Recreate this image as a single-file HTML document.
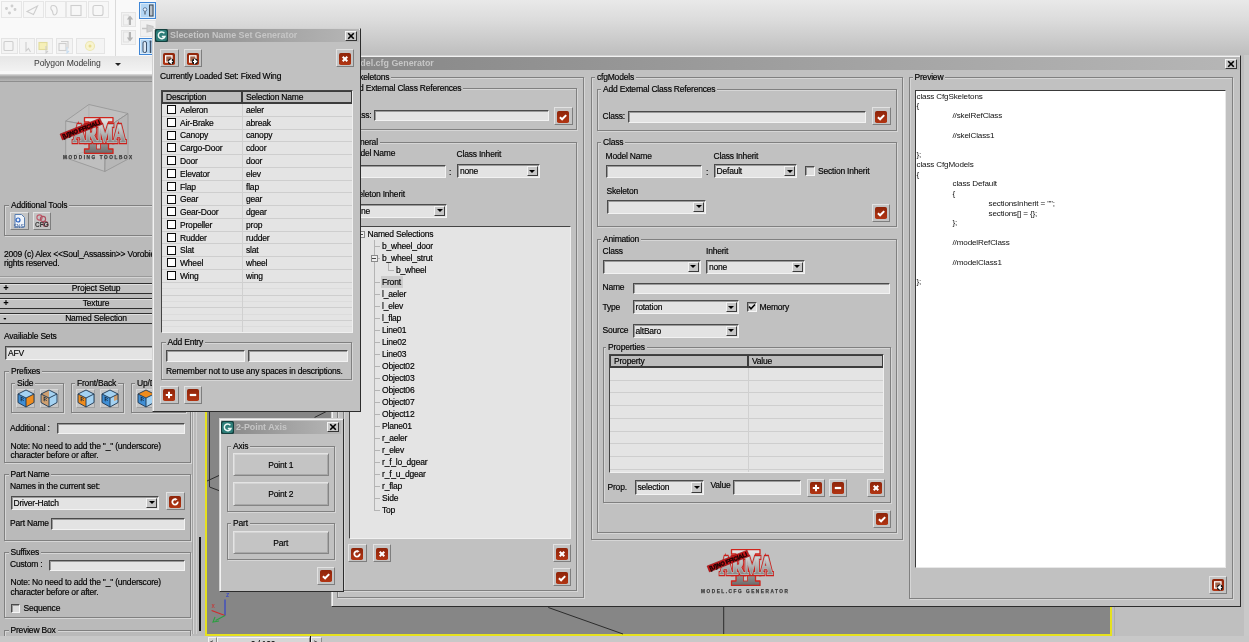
<!DOCTYPE html>
<html><head><meta charset="utf-8"><title>Model.cfg Generator</title>
<style>
html,body{margin:0;padding:0;}
body{width:1249px;height:642px;overflow:hidden;position:relative;background:#bebebe;font-family:"Liberation Sans",sans-serif;font-size:8.5px;letter-spacing:-0.2px;color:#0a0a0a;}
.a{position:absolute;box-sizing:border-box;white-space:nowrap;}
.t,.it,.pbtn{color:#000;-webkit-text-stroke:0.17px #000;}
.gb{border:1px solid #808080;box-shadow:1px 1px 0 #d6d6d6, inset 1px 1px 0 #d6d6d6;}
.inp{background:#e3e3e3;border:1px solid;border-color:#4a4a4a #f2f2f2 #f2f2f2 #4a4a4a;box-shadow:inset 1px 1px 0 #9a9a9a;}
.it{position:absolute;left:2px;top:50%;margin-top:-6px;line-height:12px;height:12px;}
.dd{position:absolute;right:1px;top:1px;bottom:1px;width:11px;background:#c6c6c6;border:1px solid;border-color:#f4f4f4 #3a3a3a #3a3a3a #f4f4f4;box-sizing:border-box;}
.dd i{position:absolute;left:50%;top:50%;margin:-1.5px 0 0 -3px;border:3px solid transparent;border-top:3.5px solid #000;border-bottom:0;}
.btn{background:#c4c4c4;border:1.3px solid;border-color:#e2e2e2 #7e7e7e #7e7e7e #e2e2e2;}
.ic{position:absolute;}
.chk{background:#dedede;border:1px solid;border-color:#4a4a4a #f6f6f6 #f6f6f6 #4a4a4a;box-shadow:inset 1px 1px 0 #9a9a9a;}
.dlg{background:#c1c1c1;border:1px solid;border-color:#d2d2d2 #2c2c2c #2c2c2c #d2d2d2;border-width:1px 1.4px 1.4px 1px;box-shadow:inset 1px 1px 0 #f2f2f2;}
.tb{background:linear-gradient(90deg,#868686 0%,#a4a4a4 60%,#b6b6b6 100%);}
.tt{color:#c6c6c6;font-weight:bold;font-size:8.9px;letter-spacing:0;}
.cb{background:#c8c8c8;border:1px solid;border-color:#f4f4f4 #333 #333 #f4f4f4;}
.lv{background:#e4e4e4;border:1px solid;border-color:#444 #f0f0f0 #f0f0f0 #444;}
.lvh{background:#bdbdbd;border:1px solid #3c3c3c;border-width:1px 1px 2px 1px;}
.pbtn{background:#c4c4c4;border:1px solid;border-color:#e4e4e4 #858585 #858585 #e4e4e4;box-shadow:inset 1px 1px 0 #d4d4d4, inset -1px -1px 0 #a8a8a8;text-align:center;}
.roll{background:#c2c2c2;border:solid #2e2e2e;border-width:1.4px 1px 1.9px 1px;box-shadow:inset 0 1px 0 #dedede;}
pre{margin:0;font-family:"Liberation Sans",sans-serif;}
</style></head><body>
<svg width="0" height="0" style="position:absolute"><defs><linearGradient id="rg" x1="0" y1="0" x2="0" y2="1"><stop offset="0" stop-color="#8e2409"/><stop offset="1" stop-color="#b23513"/></linearGradient></defs></svg>
<div id="root" style="position:absolute;left:0;top:0;width:1249px;height:642px;overflow:hidden;will-change:transform;">

<div class="a " style="left:0px;top:0px;width:1249px;height:56px;background:linear-gradient(180deg,#e9e9e9 0%,#dcdcdc 35%,#bdbdbd 100%)"></div>
<div class="a " style="left:1112px;top:55px;width:137px;height:587px;background:#bfbfbf"></div>
<div class="a " style="left:1114px;top:55px;width:1px;height:587px;background:#adadad"></div>
<div class="a " style="left:1244px;top:55px;width:5px;height:587px;background:#c9c9c9"></div>
<div class="a " style="left:0px;top:0px;width:156px;height:56.3px;background:#f9f9f9"></div>
<div class="a " style="left:115px;top:0px;width:1px;height:56px;background:#dadada"></div>
<div class="a " style="left:0px;top:56.3px;width:156px;height:14.7px;background:linear-gradient(180deg,#e6e6e6,#f2f2f2)"></div>
<div class="a " style="left:0px;top:71px;width:156px;height:2.5px;background:#f8f8f8"></div>
<div class="a " style="left:0px;top:73.5px;width:156px;height:3.5px;background:linear-gradient(180deg,#dedede,#9c9c9c)"></div>
<div class="a " style="left:0px;top:77px;width:156px;height:4px;background:linear-gradient(180deg,#9c9c9c,#b6b6b6)"></div>
<div class="a " style="left:0px;top:81px;width:156px;height:1px;background:#8e8e8e"></div>
<div class="a" style="left:34px;top:57px;height:12px;line-height:12px;font-size:8.6px;letter-spacing:-0.1px;color:#383838;">Polygon Modeling</div>
<div class="a" style="left:115px;top:63px;border:3px solid transparent;border-top:3.5px solid #222;border-bottom:0;"></div>
<div class="a " style="left:1px;top:1px;width:21px;height:17px;border:1px solid #e6e6e6;background:#f7f7f7"></div>
<div class="a " style="left:23px;top:1px;width:21px;height:17px;border:1px solid #e6e6e6;background:#f7f7f7"></div>
<div class="a " style="left:45px;top:1px;width:21px;height:17px;border:1px solid #e6e6e6;background:#f7f7f7"></div>
<div class="a " style="left:66px;top:1px;width:21px;height:17px;border:1px solid #e6e6e6;background:#f7f7f7"></div>
<div class="a " style="left:88px;top:1px;width:21px;height:17px;border:1px solid #e6e6e6;background:#f7f7f7"></div>
<div class="a " style="left:1px;top:38px;width:17px;height:16px;border:1px solid #e4e4e4;background:#f4f4f4"></div>
<div class="a " style="left:19px;top:38px;width:16px;height:16px;border:1px solid #e4e4e4;background:#f4f4f4"></div>
<div class="a " style="left:36px;top:38px;width:17px;height:16px;border:1px solid #e4e4e4;background:#f4f4f4"></div>
<div class="a " style="left:56px;top:38px;width:17px;height:16px;border:1px solid #e4e4e4;background:#f4f4f4"></div>
<div class="a " style="left:76px;top:38px;width:29px;height:16px;border:1px solid #e4e4e4;background:#f4f4f4"></div>
<div class="a " style="left:121px;top:12px;width:15px;height:15px;border:1px solid #e4e4e4;background:#f2f2f2"></div>
<div class="a " style="left:121px;top:30px;width:15px;height:15px;border:1px solid #e4e4e4;background:#f2f2f2"></div>
<div class="a " style="left:139px;top:2px;width:17.3px;height:17px;border:1.3px solid #3f86d6;background:#b4d6f4;box-shadow:inset 0 0 0 1px #dcecfa"></div>
<div class="a " style="left:139px;top:38px;width:17.3px;height:17px;border:1.3px solid #3f86d6;background:#b4d6f4;box-shadow:inset 0 0 0 1px #dcecfa"></div>
<div class="a " style="left:140px;top:20px;width:16px;height:17px;border:1px solid #e4e4e4;background:#f0f0f0"></div>
<div class="a " style="left:0px;top:82px;width:206px;height:554px;background:#bababa"></div>
<div class="a " style="left:204.5px;top:83px;width:907.5px;height:553px;background:#868686;border:2px solid #e6e11e"></div>
<div class="a " style="left:0px;top:636px;width:1249px;height:6px;background:#c6c6c6"></div>
<svg class="a" style="left:0;top:0" width="160" height="56" viewBox="0 0 160 56">
<g fill="none" stroke="#cecece" stroke-width="1.1">
<circle cx="6.5" cy="8.5" r=".9" fill="#d6d6d6"/><circle cx="12" cy="6" r=".9" fill="#d6d6d6"/><circle cx="15" cy="9.5" r=".9" fill="#d6d6d6"/><circle cx="9.5" cy="13" r=".9" fill="#d6d6d6"/>
<path d="M27 11.5L37.5 6L33.5 14.5Z"/>
<path d="M53 5.5C50 5.5 50.5 9 52 10.5C53.5 12 52 15 54.5 15C58 15 58.5 5.5 53 5.5Z"/>
<rect x="71" y="5.5" width="10" height="10"/>
<rect x="93" y="5.500" width="10" height="10" rx="2"/>
<rect x="4" y="41.500" width="9" height="9" rx="1"/>
<path d="M26 42V51L28.500 48.500L30.500 52"/>
<rect x="39" y="42.500" width="8" height="7" fill="#f6f0b8" stroke="#e2dc9c"/>
<path d="M46 46V53L48 51"/>
<rect x="59" y="43.500" width="7" height="7"/><path d="M61 41.500H68V48.500"/><path d="M67 47V53L69 51" stroke="#c6dcf0"/>
<circle cx="90" cy="46" r="4.500" stroke="#ece6b0" fill="#f8f4d0"/><circle cx="90" cy="46" r="1.500" fill="#e8dc90" stroke="none"/>
<rect x="123.500" y="15" width="5" height="10" stroke="#e2e2e2"/><path d="M129 25V19.500H126.800L130 15.500L133.200 19.500H131V25Z" fill="#b4b4b4" stroke="none"/>
<rect x="123.500" y="32" width="5" height="10" stroke="#e2e2e2"/><path d="M129 32V37.500H126.800L130 41.500L133.200 37.500H131V32Z" fill="#b4b4b4" stroke="none"/>
<path d="M142 28.500H147" stroke="#c4c4c4" stroke-width="1.500"/><path d="M147 25V32L153 30.500V26.500Z" fill="#cfcfcf" stroke="#c4c4c4"/>
</g>
<rect x="149.500" y="5" width="3.500" height="11" fill="#b8c0c8" stroke="#3c4650" stroke-width="1"/><circle cx="145" cy="9.500" r="1.800" fill="#e8f2fc" stroke="#4a6a90" stroke-width=".8"/><path d="M145 11.500V14.500" stroke="#3c4650" stroke-width="1"/>
<rect x="143" y="41.500" width="3.500" height="11" rx="1.500" fill="#dce8f4" stroke="#3c5068" stroke-width="1"/><path d="M150.500 42V53" stroke="#3c5068" stroke-width="1.400"/><circle cx="150.500" cy="41.500" r="1" fill="#3c5068"/>
</svg>
<svg class="a" style="left:0;top:0" width="1249" height="642" viewBox="0 0 1249 642"><g stroke="#2c2c2c" stroke-width="1" fill="none">
<path d="M209.500 85V487L219 490.600M207 481L219 475.500"/>
<path d="M314.600 417.400L327 411.200"/>
<path d="M548.300 607.500L623 634"/>
<path d="M723.700 606V634"/>
</g>
<g fill="none" stroke-width="1.100">
<path d="M225 615.600V599.600" stroke="#2a3cd0"/>
<path d="M225 615.600L211.600 610.500" stroke="#d02a2a"/>
<path d="M225 615.600L215.600 620.400" stroke="#2aa040"/>
<path d="M215 617L213 622L219 621" stroke="#2aa040"/>
</g></svg>
<div class="a" style="left:226px;top:590.5px;font-size:6.5px;line-height:7px;color:#2a3cd0;letter-spacing:0">z</div>
<div class="a" style="left:211.5px;top:601.5px;font-size:6.5px;line-height:7px;color:#d02a2a;letter-spacing:0">x</div>
<div class="a gb" style="left:4px;top:205px;width:187px;height:31px;"></div>
<div class="a t" style="left:9px;top:199px;height:12px;line-height:12px;background:#bababa;padding:0 2px;">Additional Tools</div>
<div class="a btn" style="left:10px;top:212px;width:19px;height:18px;"></div>
<div class="a btn" style="left:32.5px;top:212px;width:18.5px;height:18px;"></div>
<svg class="a" style="left:12px;top:213px" width="16" height="16" viewBox="0 0 16 16"><path d="M3 1.5H9.5L12.5 4.5V14H3Z" fill="#eef3fa" stroke="#5a7fb0" stroke-width="1"/><circle cx="6" cy="7" r="2" fill="none" stroke="#2a62c0" stroke-width="1.2"/></svg>
<div class="a" style="left:13.5px;top:222.5px;font-size:5px;line-height:6px;color:#3a5f9a;letter-spacing:0">SNS</div>
<svg class="a" style="left:34px;top:213px" width="16" height="16" viewBox="0 0 16 16"><circle cx="5.5" cy="4.5" r="2.6" fill="none" stroke="#c05a6a" stroke-width="1.1"/><circle cx="9" cy="6" r="2.6" fill="none" stroke="#b05060" stroke-width="1.1"/><circle cx="11.5" cy="11" r="2.4" fill="none" stroke="#a04a5a" stroke-width="1.1"/></svg>
<div class="a" style="left:35px;top:220.5px;font-size:6.5px;line-height:8px;color:#333;letter-spacing:0;font-weight:bold">CFG</div>
<div class="a t" style="left:4px;top:248px;height:12px;line-height:12px;">2009 (c) Alex &lt;&lt;Soul_Assassin&gt;&gt; Vorobiev. All</div>
<div class="a t" style="left:4px;top:257.3px;height:12px;line-height:12px;">rights reserved.</div>
<div class="a " style="left:0px;top:276px;width:206px;height:1px;background:#9a9a9a"></div>
<div class="a " style="left:0px;top:277px;width:206px;height:1px;background:#d4d4d4"></div>
<div class="a roll" style="left:-2px;top:282.5px;width:197px;height:11.6px;"></div>
<div class="a t" style="left:3.5px;top:282.3px;height:12px;line-height:12px;font-weight:bold">+</div>
<div class="a t" style="left:1px;width:190px;text-align:center;top:282.3px;height:12px;line-height:12px;">Project Setup</div>
<div class="a roll" style="left:-2px;top:297.5px;width:197px;height:11.6px;"></div>
<div class="a t" style="left:3.5px;top:297.3px;height:12px;line-height:12px;font-weight:bold">+</div>
<div class="a t" style="left:1px;width:190px;text-align:center;top:297.3px;height:12px;line-height:12px;">Texture</div>
<div class="a roll" style="left:-2px;top:312.5px;width:197px;height:11.6px;"></div>
<div class="a t" style="left:3.5px;top:312.3px;height:12px;line-height:12px;font-weight:bold">-</div>
<div class="a t" style="left:1px;width:190px;text-align:center;top:312.3px;height:12px;line-height:12px;">Named Selection</div>
<div class="a t" style="left:4px;top:330px;height:12px;line-height:12px;">Availiable Sets</div>
<div class="a inp" style="left:5px;top:345.5px;width:195px;height:14px;"><span class="it" style="left:2px">AFV</span></div>
<div class="a gb" style="left:4px;top:371px;width:187px;height:92px;"></div>
<div class="a t" style="left:9px;top:365px;height:12px;line-height:12px;background:#bababa;padding:0 2px;">Prefixes</div>
<div class="a gb" style="left:10.5px;top:383px;width:53.5px;height:29.5px;"></div>
<div class="a t" style="left:15px;top:377px;height:12px;line-height:12px;background:#bababa;padding:0 2px;">Side</div>
<div class="a gb" style="left:70.5px;top:383px;width:53.5px;height:29.5px;"></div>
<div class="a t" style="left:75px;top:377px;height:12px;line-height:12px;background:#bababa;padding:0 2px;">Front/Back</div>
<div class="a gb" style="left:130.5px;top:383px;width:55.5px;height:29.5px;"></div>
<div class="a t" style="left:135px;top:377px;height:12px;line-height:12px;background:#bababa;padding:0 2px;">Up/Down</div>
<div class="a " style="left:15.8px;top:389.3px;width:19px;height:19px;background:#c6c6c6;border:1px solid;border-color:#d8d8d8 #a2a2a2 #a2a2a2 #d8d8d8"></div>
<svg class="a" style="left:17.5px;top:390.3px;overflow:visible" width="16" height="17" viewBox="0 0 16 17"><path d="M8 0L16 4L8 8L0 4Z" fill="#a4d2f2"/><path d="M0 4L8 8V17L0 12.5Z" fill="#3f8fd6"/><path d="M8 8L16 4V12.5L8 17Z" fill="#f08c1c"/><path d="M8 0L16 4V12.5L8 17L0 12.5V4ZM0 4L8 8L16 4M8 8V17" fill="none" stroke="#1c3550" stroke-width=".9" stroke-linejoin="round"/><text x="2.3" y="11.3" transform="skewY(26.5) translate(0,-1.6)" font-family="Liberation Sans,sans-serif" font-weight="bold" font-size="6.4" fill="#14283c">F</text></svg>
<div class="a " style="left:39.5px;top:389.3px;width:19px;height:19px;background:#c6c6c6;border:1px solid;border-color:#d8d8d8 #a2a2a2 #a2a2a2 #d8d8d8"></div>
<svg class="a" style="left:41.2px;top:390.3px;overflow:visible" width="16" height="17" viewBox="0 0 16 17"><path d="M8 0L16 4L8 8L0 4Z" fill="#a4d2f2"/><path d="M0 4L8 8V17L0 12.5Z" fill="#cfa070"/><path d="M8 8L16 4V12.5L8 17Z" fill="#a4d2f2"/><path d="M8 0L0 4L8 8Z" fill="#cfa070"/><path d="M8 0L16 4V12.5L8 17L0 12.5V4ZM0 4L8 8L16 4M8 8V17" fill="none" stroke="#1c3550" stroke-width=".9" stroke-linejoin="round"/><text x="2.3" y="11.3" transform="skewY(26.5) translate(0,-1.6)" font-family="Liberation Sans,sans-serif" font-weight="bold" font-size="6.4" fill="#14283c">F</text></svg>
<div class="a " style="left:76px;top:389.3px;width:19px;height:19px;background:#c6c6c6;border:1px solid;border-color:#d8d8d8 #a2a2a2 #a2a2a2 #d8d8d8"></div>
<svg class="a" style="left:77.7px;top:390.3px;overflow:visible" width="16" height="17" viewBox="0 0 16 17"><path d="M8 0L16 4L8 8L0 4Z" fill="#a4d2f2"/><path d="M0 4L8 8V17L0 12.5Z" fill="#f08c1c"/><path d="M8 8L16 4V12.5L8 17Z" fill="#a4d2f2"/><path d="M8 0L16 4V12.5L8 17L0 12.5V4ZM0 4L8 8L16 4M8 8V17" fill="none" stroke="#1c3550" stroke-width=".9" stroke-linejoin="round"/><text x="2.3" y="11.3" transform="skewY(26.5) translate(0,-1.6)" font-family="Liberation Sans,sans-serif" font-weight="bold" font-size="6.4" fill="#14283c">F</text></svg>
<div class="a " style="left:100px;top:389.3px;width:19px;height:19px;background:#c6c6c6;border:1px solid;border-color:#d8d8d8 #a2a2a2 #a2a2a2 #d8d8d8"></div>
<svg class="a" style="left:101.7px;top:390.3px;overflow:visible" width="16" height="17" viewBox="0 0 16 17"><path d="M8 0L16 4L8 8L0 4Z" fill="#a4d2f2"/><path d="M0 4L8 8V17L0 12.5Z" fill="#3f8fd6"/><path d="M8 8L16 4V12.5L8 17Z" fill="#a4d2f2"/><path d="M12 6L16 4V9.5L12 11Z" fill="#cfa070"/><path d="M8 0L16 4V12.5L8 17L0 12.5V4ZM0 4L8 8L16 4M8 8V17" fill="none" stroke="#1c3550" stroke-width=".9" stroke-linejoin="round"/><text x="2.3" y="11.3" transform="skewY(26.5) translate(0,-1.6)" font-family="Liberation Sans,sans-serif" font-weight="bold" font-size="6.4" fill="#14283c">F</text></svg>
<div class="a " style="left:136.3px;top:389.3px;width:19px;height:19px;background:#c6c6c6;border:1px solid;border-color:#d8d8d8 #a2a2a2 #a2a2a2 #d8d8d8"></div>
<svg class="a" style="left:138px;top:390.3px;overflow:visible" width="16" height="17" viewBox="0 0 16 17"><path d="M8 0L16 4L8 8L0 4Z" fill="#f08c1c"/><path d="M0 4L8 8V17L0 12.5Z" fill="#3f8fd6"/><path d="M8 8L16 4V12.5L8 17Z" fill="#a4d2f2"/><path d="M8 0L16 4V12.5L8 17L0 12.5V4ZM0 4L8 8L16 4M8 8V17" fill="none" stroke="#1c3550" stroke-width=".9" stroke-linejoin="round"/><text x="2.3" y="11.3" transform="skewY(26.5) translate(0,-1.6)" font-family="Liberation Sans,sans-serif" font-weight="bold" font-size="6.4" fill="#14283c">F</text></svg>
<div class="a " style="left:160px;top:389.3px;width:19px;height:19px;background:#c6c6c6;border:1px solid;border-color:#d8d8d8 #a2a2a2 #a2a2a2 #d8d8d8"></div>
<svg class="a" style="left:161.7px;top:390.3px;overflow:visible" width="16" height="17" viewBox="0 0 16 17"><path d="M8 0L16 4L8 8L0 4Z" fill="#a4d2f2"/><path d="M0 4L8 8V17L0 12.5Z" fill="#3f8fd6"/><path d="M8 8L16 4V12.5L8 17Z" fill="#a4d2f2"/><path d="M0 12.5L8 17L16 12.5L8 14Z" fill="#f08c1c"/><path d="M8 0L16 4V12.5L8 17L0 12.5V4ZM0 4L8 8L16 4M8 8V17" fill="none" stroke="#1c3550" stroke-width=".9" stroke-linejoin="round"/><text x="2.3" y="11.3" transform="skewY(26.5) translate(0,-1.6)" font-family="Liberation Sans,sans-serif" font-weight="bold" font-size="6.4" fill="#14283c">F</text></svg>
<div class="a t" style="left:10px;top:421.5px;height:12px;line-height:12px;">Additional :</div>
<div class="a inp" style="left:56.5px;top:422.5px;width:128.5px;height:11.5px;"></div>
<div class="a t" style="left:10.5px;top:439.6px;height:12px;line-height:12px;">Note: No need to add the "_" (underscore)</div>
<div class="a t" style="left:10.5px;top:449px;height:12px;line-height:12px;">character before or after.</div>
<div class="a gb" style="left:4px;top:474px;width:187px;height:66.5px;"></div>
<div class="a t" style="left:8.5px;top:468px;height:12px;line-height:12px;background:#bababa;padding:0 2px;">Part Name</div>
<div class="a t" style="left:10px;top:480px;height:12px;line-height:12px;">Names in the current set:</div>
<div class="a inp" style="left:10.5px;top:495.5px;width:148.5px;height:14px;"><span class="it">Driver-Hatch</span><span class="dd"><i></i></span></div>
<div class="a btn" style="left:166.3px;top:492.3px;width:18.3px;height:18.1px;"></div><svg class="a" style="left:169.2px;top:495.7px" width="12" height="12" viewBox="0 0 12 12"><rect x="0" y="0" width="12" height="12" rx="1.8" fill="url(#rg)"/><path d="M6.6 3.3A2.7 2.7 0 1 0 8.7 5.6" stroke="#fff" stroke-width="1.8" fill="none"/><path d="M6.2 1.9L8.6 3.3L6.2 4.7Z" fill="#fff"/></svg>
<div class="a t" style="left:10px;top:517px;height:12px;line-height:12px;">Part Name</div>
<div class="a inp" style="left:51px;top:518px;width:134px;height:11.5px;"></div>
<div class="a gb" style="left:4px;top:552px;width:187px;height:65.5px;"></div>
<div class="a t" style="left:8.5px;top:546px;height:12px;line-height:12px;background:#bababa;padding:0 2px;">Suffixes</div>
<div class="a t" style="left:10px;top:558.4px;height:12px;line-height:12px;">Custom :</div>
<div class="a inp" style="left:48.5px;top:559.5px;width:136.5px;height:11px;"></div>
<div class="a t" style="left:10.5px;top:576px;height:12px;line-height:12px;">Note: No need to add the "_" (underscore)</div>
<div class="a t" style="left:10.5px;top:585.6px;height:12px;line-height:12px;">character before or after.</div>
<div class="a chk" style="left:11px;top:603.5px;width:9px;height:9px;"></div>
<div class="a t" style="left:23.5px;top:602px;height:12px;line-height:12px;">Sequence</div>
<div class="a gb" style="left:4px;top:630px;width:187px;height:20px;"></div>
<div class="a t" style="left:8.5px;top:624px;height:12px;line-height:12px;background:#bababa;padding:0 2px;">Preview Box</div>
<div class="a " style="left:192px;top:83px;width:1px;height:551px;background:#a2a2a2"></div>
<div class="a " style="left:193px;top:83px;width:1px;height:551px;background:#d6d6d6"></div>
<div class="a " style="left:198.5px;top:537px;width:2.5px;height:94px;background:#141414"></div>
<div class="a " style="left:196px;top:83px;width:1px;height:551px;background:#cfcfcf"></div>
<svg class="a" style="left:40.5px;top:96.5px;overflow:visible" width="120" height="95" viewBox="0 0 120 95"><defs><linearGradient id="mg1" x1="0" y1="0" x2="0" y2="1"><stop offset="0" stop-color="#e6e6e6"/><stop offset="0.5" stop-color="#b4b4b4"/><stop offset="1" stop-color="#6a6a6a"/></linearGradient></defs><polygon points="47.9,7.5 87.0,16.5 64.5,31.5 24.7,24.0" fill="#c2c2c2" fill-opacity=".55" stroke="#8f8f8f" stroke-width=".7"/><polygon points="24.7,24.0 64.5,31.5 63.8,74.5 24.7,60.8" fill="#c4c4c4" fill-opacity=".5" stroke="#8f8f8f" stroke-width=".7"/><polygon points="64.5,31.5 87.0,16.5 87.0,62.1 63.8,74.5" fill="#b4b4b4" fill-opacity=".5" stroke="#8f8f8f" stroke-width=".7"/><path d="M47.9,7.5L47.9,53.5L24.7,60.8M47.9,53.5L87.0,62.1" stroke="#a4a4a4" stroke-width=".5" fill="none"/><g stroke="#d0241c" stroke-width="1.3" fill="url(#mg1)" stroke-linejoin="round"><path d="M43.5 20.600H72V25H67.500V52H72V56.400H43.5V52H48V25H43.5Z"/></g><rect x="55.5" y="25.5" width="4" height="26.5" fill="#c4c4c4" stroke="#d0241c" stroke-width=".8"/><text x="58.2" y="45.2" text-anchor="middle" font-family="Liberation Serif,serif" font-weight="bold" font-size="25.2" textLength="52.5" lengthAdjust="spacingAndGlyphs" fill="#cc1f1a" stroke="#cc1f1a" stroke-width="4.6" stroke-linejoin="miter">ARMA</text><text x="58.2" y="45.2" text-anchor="middle" font-family="Liberation Serif,serif" font-weight="bold" font-size="25.2" textLength="52.5" lengthAdjust="spacingAndGlyphs" fill="url(#mg1)" stroke="#b0b0b0" stroke-width="2.2" stroke-linejoin="miter">ARMA</text><text x="58.2" y="45.2" text-anchor="middle" font-family="Liberation Serif,serif" font-weight="bold" font-size="25.2" textLength="52.5" lengthAdjust="spacingAndGlyphs" fill="url(#mg1)">ARMA</text><g transform="translate(40.3,32.2) rotate(-21.5)"><rect x="-21.5" y="-3.3" width="43" height="6.4" fill="#c4161a" stroke="#8e0e10" stroke-width=".5"/><text x="0" y="2.2" text-anchor="middle" font-family="Liberation Sans,sans-serif" font-weight="bold" font-size="5.8" textLength="40" lengthAdjust="spacingAndGlyphs" fill="#140303" stroke="#140303" stroke-width=".35">[U]NO FFICIAL!</text></g><text x="22.1" y="62.3" font-family="Liberation Sans,sans-serif" font-weight="bold" font-size="4.7" textLength="68.9" lengthAdjust="spacing" fill="#3c3c3c" stroke="#3c3c3c" stroke-width=".25">MODDING TOOLBOX</text></svg>
<div class="a dlg" style="left:331px;top:55px;width:910px;height:552px;"></div>
<div class="a tb" style="left:333px;top:57px;width:906px;height:13px;"></div>
<svg class="a" style="left:333px;top:57px" width="13" height="13" viewBox="0 0 13 13"><rect width="13" height="13" rx="1.5" fill="#143f3d"/><rect x="1" y="1" width="11" height="11" rx="2" fill="#2d7d78"/><path d="M9.4 4.2A3.4 3.4 0 1 0 9.9 7.6H6.8" stroke="#eef8f6" stroke-width="1.5" fill="none"/></svg>
<div class="a tt" style="left:347.5px;top:57px;height:13px;line-height:13px;">Model.cfg Generator</div>
<div class="a cb" style="left:1225px;top:58.5px;width:12px;height:10px;"><svg width="12" height="10" viewBox="0 0 12 10" style="position:absolute;left:-1px;top:-1px"><path d="M3.2 2.2L8.8 7.8M8.8 2.2L3.2 7.8" stroke="#000" stroke-width="1.6" fill="none"/></svg></div>
<div class="a gb" style="left:337px;top:76.5px;width:247px;height:521.5px;"></div>
<div class="a t" style="left:341px;top:70.5px;height:12px;line-height:12px;background:#c1c1c1;padding:0 2px;">cfgSkeletons</div>
<div class="a gb" style="left:343px;top:87.5px;width:234px;height:42px;"></div>
<div class="a t" style="left:347px;top:81.5px;height:12px;line-height:12px;background:#c1c1c1;padding:0 2px;">Add External Class References</div>
<div class="a t" style="left:349px;top:108.8px;height:12px;line-height:12px;">Class:</div>
<div class="a inp" style="left:374px;top:109.8px;width:174.5px;height:11.7px;"></div>
<div class="a btn" style="left:554.3px;top:107.3px;width:18.3px;height:18.1px;"></div><svg class="a" style="left:557.2px;top:110.7px" width="12" height="12" viewBox="0 0 12 12"><rect x="0" y="0" width="12" height="12" rx="1.8" fill="url(#rg)"/><path d="M2.9 6.3L5.1 8.3L9.2 4.1" stroke="#fff" stroke-width="2" fill="none"/></svg>
<div class="a gb" style="left:343px;top:142px;width:234px;height:449px;"></div>
<div class="a t" style="left:347px;top:136px;height:12px;line-height:12px;background:#c1c1c1;padding:0 2px;">General</div>
<div class="a t" style="left:349px;top:147.3px;height:12px;line-height:12px;">Model Name</div>
<div class="a t" style="left:456.5px;top:147.5px;height:12px;line-height:12px;">Class Inherit</div>
<div class="a inp" style="left:349px;top:165px;width:97px;height:13px;"></div>
<div class="a t" style="left:449px;top:166px;height:12px;line-height:12px;">:</div>
<div class="a inp" style="left:457px;top:164px;width:82.5px;height:14px;"><span class="it">none</span><span class="dd"><i></i></span></div>
<div class="a t" style="left:349px;top:188px;height:12px;line-height:12px;">Skeleton Inherit</div>
<div class="a inp" style="left:349px;top:203.5px;width:98px;height:14px;"><span class="it">none</span><span class="dd"><i></i></span></div>
<div class="a lv" style="left:349px;top:226px;width:222px;height:312.5px;"></div>
<div class="a " style="left:373.5px;top:240px;width:1px;height:270.5px;background:#b4b4b4"></div>
<div class="a t" style="left:367.5px;top:228px;height:12px;line-height:12px;">Named Selections</div>
<div class="a " style="left:374px;top:245.5px;width:6px;height:1px;background:#b4b4b4"></div>
<div class="a t" style="left:382px;top:240px;height:12px;line-height:12px;">b_wheel_door</div>
<div class="a " style="left:374px;top:257.5px;width:6px;height:1px;background:#b4b4b4"></div>
<div class="a t" style="left:382px;top:252px;height:12px;line-height:12px;">b_wheel_strut</div>
<div class="a " style="left:387.5px;top:263px;width:1px;height:7px;background:#b4b4b4"></div>
<div class="a " style="left:388px;top:269.5px;width:6px;height:1px;background:#b4b4b4"></div>
<div class="a t" style="left:396px;top:264px;height:12px;line-height:12px;">b_wheel</div>
<div class="a " style="left:374px;top:281.5px;width:6px;height:1px;background:#b4b4b4"></div>
<div class="a " style="left:380.5px;top:276px;width:22.5px;height:12px;background:#cdcdcd"></div>
<div class="a t" style="left:382px;top:276px;height:12px;line-height:12px;">Front</div>
<div class="a " style="left:374px;top:293.5px;width:6px;height:1px;background:#b4b4b4"></div>
<div class="a t" style="left:382px;top:288px;height:12px;line-height:12px;">l_aeler</div>
<div class="a " style="left:374px;top:305.5px;width:6px;height:1px;background:#b4b4b4"></div>
<div class="a t" style="left:382px;top:300px;height:12px;line-height:12px;">l_elev</div>
<div class="a " style="left:374px;top:317.5px;width:6px;height:1px;background:#b4b4b4"></div>
<div class="a t" style="left:382px;top:312px;height:12px;line-height:12px;">l_flap</div>
<div class="a " style="left:374px;top:329.5px;width:6px;height:1px;background:#b4b4b4"></div>
<div class="a t" style="left:382px;top:324px;height:12px;line-height:12px;">Line01</div>
<div class="a " style="left:374px;top:341.5px;width:6px;height:1px;background:#b4b4b4"></div>
<div class="a t" style="left:382px;top:336px;height:12px;line-height:12px;">Line02</div>
<div class="a " style="left:374px;top:353.5px;width:6px;height:1px;background:#b4b4b4"></div>
<div class="a t" style="left:382px;top:348px;height:12px;line-height:12px;">Line03</div>
<div class="a " style="left:374px;top:365.5px;width:6px;height:1px;background:#b4b4b4"></div>
<div class="a t" style="left:382px;top:360px;height:12px;line-height:12px;">Object02</div>
<div class="a " style="left:374px;top:377.5px;width:6px;height:1px;background:#b4b4b4"></div>
<div class="a t" style="left:382px;top:372px;height:12px;line-height:12px;">Object03</div>
<div class="a " style="left:374px;top:389.5px;width:6px;height:1px;background:#b4b4b4"></div>
<div class="a t" style="left:382px;top:384px;height:12px;line-height:12px;">Object06</div>
<div class="a " style="left:374px;top:401.5px;width:6px;height:1px;background:#b4b4b4"></div>
<div class="a t" style="left:382px;top:396px;height:12px;line-height:12px;">Object07</div>
<div class="a " style="left:374px;top:413.5px;width:6px;height:1px;background:#b4b4b4"></div>
<div class="a t" style="left:382px;top:408px;height:12px;line-height:12px;">Object12</div>
<div class="a " style="left:374px;top:425.5px;width:6px;height:1px;background:#b4b4b4"></div>
<div class="a t" style="left:382px;top:420px;height:12px;line-height:12px;">Plane01</div>
<div class="a " style="left:374px;top:437.5px;width:6px;height:1px;background:#b4b4b4"></div>
<div class="a t" style="left:382px;top:432px;height:12px;line-height:12px;">r_aeler</div>
<div class="a " style="left:374px;top:449.5px;width:6px;height:1px;background:#b4b4b4"></div>
<div class="a t" style="left:382px;top:444px;height:12px;line-height:12px;">r_elev</div>
<div class="a " style="left:374px;top:461.5px;width:6px;height:1px;background:#b4b4b4"></div>
<div class="a t" style="left:382px;top:456px;height:12px;line-height:12px;">r_f_lo_dgear</div>
<div class="a " style="left:374px;top:473.5px;width:6px;height:1px;background:#b4b4b4"></div>
<div class="a t" style="left:382px;top:468px;height:12px;line-height:12px;">r_f_u_dgear</div>
<div class="a " style="left:374px;top:485.5px;width:6px;height:1px;background:#b4b4b4"></div>
<div class="a t" style="left:382px;top:480px;height:12px;line-height:12px;">r_flap</div>
<div class="a " style="left:374px;top:497.5px;width:6px;height:1px;background:#b4b4b4"></div>
<div class="a t" style="left:382px;top:492px;height:12px;line-height:12px;">Side</div>
<div class="a " style="left:374px;top:509.5px;width:6px;height:1px;background:#b4b4b4"></div>
<div class="a t" style="left:382px;top:504px;height:12px;line-height:12px;">Top</div>
<div class="a " style="left:357.5px;top:230.5px;width:7px;height:7px;background:#eee;border:1px solid #8a8a8a"></div>
<div class="a " style="left:359px;top:233.5px;width:4px;height:1px;background:#444"></div>
<div class="a " style="left:370.5px;top:254.5px;width:7px;height:7px;background:#eee;border:1px solid #8a8a8a"></div>
<div class="a " style="left:372px;top:257.5px;width:4px;height:1px;background:#444"></div>
<div class="a btn" style="left:348.3px;top:544.3px;width:18.3px;height:18.1px;"></div><svg class="a" style="left:351.2px;top:547.7px" width="12" height="12" viewBox="0 0 12 12"><rect x="0" y="0" width="12" height="12" rx="1.8" fill="url(#rg)"/><path d="M6.6 3.3A2.7 2.7 0 1 0 8.7 5.6" stroke="#fff" stroke-width="1.8" fill="none"/><path d="M6.2 1.9L8.6 3.3L6.2 4.7Z" fill="#fff"/></svg>
<div class="a btn" style="left:372.8px;top:544.3px;width:18.3px;height:18.1px;"></div><svg class="a" style="left:375.7px;top:547.7px" width="12" height="12" viewBox="0 0 12 12"><rect x="0" y="0" width="12" height="12" rx="1.8" fill="url(#rg)"/><path d="M3.7 3.7L8.3 8.3M8.3 3.7L3.7 8.3" stroke="#fff" stroke-width="2" fill="none"/></svg>
<div class="a btn" style="left:552.8px;top:544.3px;width:18.3px;height:18.1px;"></div><svg class="a" style="left:555.7px;top:547.7px" width="12" height="12" viewBox="0 0 12 12"><rect x="0" y="0" width="12" height="12" rx="1.8" fill="url(#rg)"/><path d="M3.7 3.7L8.3 8.3M8.3 3.7L3.7 8.3" stroke="#fff" stroke-width="2" fill="none"/></svg>
<div class="a btn" style="left:552.8px;top:568.3px;width:18.3px;height:18.1px;"></div><svg class="a" style="left:555.7px;top:571.7px" width="12" height="12" viewBox="0 0 12 12"><rect x="0" y="0" width="12" height="12" rx="1.8" fill="url(#rg)"/><path d="M2.9 6.3L5.1 8.3L9.2 4.1" stroke="#fff" stroke-width="2" fill="none"/></svg>
<div class="a gb" style="left:590.5px;top:76.5px;width:312.5px;height:463px;"></div>
<div class="a t" style="left:595px;top:70.5px;height:12px;line-height:12px;background:#c1c1c1;padding:0 2px;">cfgModels</div>
<div class="a gb" style="left:596.5px;top:88.5px;width:300.5px;height:42px;"></div>
<div class="a t" style="left:601px;top:82.5px;height:12px;line-height:12px;background:#c1c1c1;padding:0 2px;">Add External Class References</div>
<div class="a t" style="left:602.5px;top:109.5px;height:12px;line-height:12px;">Class:</div>
<div class="a inp" style="left:627.5px;top:111px;width:238.5px;height:11.5px;"></div>
<div class="a btn" style="left:872.4px;top:107.1px;width:18.3px;height:18.1px;"></div><svg class="a" style="left:875.3px;top:110.5px" width="12" height="12" viewBox="0 0 12 12"><rect x="0" y="0" width="12" height="12" rx="1.8" fill="url(#rg)"/><path d="M2.9 6.3L5.1 8.3L9.2 4.1" stroke="#fff" stroke-width="2" fill="none"/></svg>
<div class="a gb" style="left:596.5px;top:142px;width:300.5px;height:85px;"></div>
<div class="a t" style="left:601px;top:136px;height:12px;line-height:12px;background:#c1c1c1;padding:0 2px;">Class</div>
<div class="a t" style="left:605.5px;top:149.5px;height:12px;line-height:12px;">Model Name</div>
<div class="a t" style="left:713.5px;top:149.5px;height:12px;line-height:12px;">Class Inherit</div>
<div class="a inp" style="left:605.5px;top:165px;width:96px;height:13px;"></div>
<div class="a t" style="left:706px;top:166px;height:12px;line-height:12px;">:</div>
<div class="a inp" style="left:713.5px;top:164px;width:83.5px;height:14px;"><span class="it">Default</span><span class="dd"><i></i></span></div>
<div class="a chk" style="left:804.5px;top:166px;width:10px;height:10px;"></div>
<div class="a t" style="left:818px;top:165px;height:12px;line-height:12px;">Section Inherit</div>
<div class="a t" style="left:606.5px;top:185px;height:12px;line-height:12px;">Skeleton</div>
<div class="a inp" style="left:606.5px;top:199.5px;width:99.5px;height:14px;"><span class="dd"><i></i></span></div>
<div class="a btn" style="left:871.8px;top:203.8px;width:18.3px;height:18.1px;"></div><svg class="a" style="left:874.7px;top:207.2px" width="12" height="12" viewBox="0 0 12 12"><rect x="0" y="0" width="12" height="12" rx="1.8" fill="url(#rg)"/><path d="M2.9 6.3L5.1 8.3L9.2 4.1" stroke="#fff" stroke-width="2" fill="none"/></svg>
<div class="a gb" style="left:596.5px;top:239px;width:300.5px;height:293.5px;"></div>
<div class="a t" style="left:601px;top:233px;height:12px;line-height:12px;background:#c1c1c1;padding:0 2px;">Animation</div>
<div class="a t" style="left:602.5px;top:245px;height:12px;line-height:12px;">Class</div>
<div class="a t" style="left:706px;top:245px;height:12px;line-height:12px;">Inherit</div>
<div class="a inp" style="left:602.5px;top:259.5px;width:98px;height:14.5px;"><span class="dd"><i></i></span></div>
<div class="a inp" style="left:706px;top:259.5px;width:98.5px;height:14.5px;"><span class="it">none</span><span class="dd"><i></i></span></div>
<div class="a t" style="left:602.5px;top:281px;height:12px;line-height:12px;">Name</div>
<div class="a inp" style="left:632.5px;top:282.5px;width:257.5px;height:11.5px;"></div>
<div class="a t" style="left:602.5px;top:300.7px;height:12px;line-height:12px;">Type</div>
<div class="a inp" style="left:632.5px;top:300px;width:106px;height:14px;"><span class="it">rotation</span><span class="dd"><i></i></span></div>
<div class="a chk" style="left:747px;top:301.8px;width:10px;height:10px;"><svg width="10" height="10" viewBox="0 0 10 10" style="position:absolute;left:-1px;top:-1px"><path d="M2 4.5L4 6.8L8 2.4" stroke="#000" stroke-width="1.5" fill="none"/></svg></div>
<div class="a t" style="left:759.5px;top:300.5px;height:12px;line-height:12px;">Memory</div>
<div class="a t" style="left:602.5px;top:324.3px;height:12px;line-height:12px;">Source</div>
<div class="a inp" style="left:632.5px;top:324px;width:106px;height:13.5px;"><span class="it">altBaro</span><span class="dd"><i></i></span></div>
<div class="a gb" style="left:602.5px;top:347px;width:288.5px;height:155.5px;"></div>
<div class="a t" style="left:606px;top:341px;height:12px;line-height:12px;background:#c1c1c1;padding:0 2px;">Properties</div>
<div class="a lv" style="left:609px;top:354px;width:274.5px;height:119px;"></div>
<div class="a lvh" style="left:610px;top:355px;width:272.5px;height:12.5px;"></div>
<div class="a " style="left:747px;top:355px;width:2px;height:12.5px;background:#3c3c3c"></div>
<div class="a t" style="left:614px;top:355.25px;height:12px;line-height:12px;">Property</div>
<div class="a t" style="left:752px;top:355.25px;height:12px;line-height:12px;">Value</div>
<div class="a " style="left:610px;top:379.7px;width:272.5px;height:1px;background:#cecece"></div>
<div class="a " style="left:610px;top:392.4px;width:272.5px;height:1px;background:#cecece"></div>
<div class="a " style="left:610px;top:405.1px;width:272.5px;height:1px;background:#cecece"></div>
<div class="a " style="left:610px;top:417.8px;width:272.5px;height:1px;background:#cecece"></div>
<div class="a " style="left:610px;top:430.5px;width:272.5px;height:1px;background:#cecece"></div>
<div class="a " style="left:610px;top:443.2px;width:272.5px;height:1px;background:#cecece"></div>
<div class="a " style="left:610px;top:455.9px;width:272.5px;height:1px;background:#cecece"></div>
<div class="a " style="left:610px;top:468.6px;width:272.5px;height:1px;background:#cecece"></div>
<div class="a " style="left:747.5px;top:367.5px;width:1px;height:104.5px;background:#d0d0d0"></div>
<div class="a t" style="left:607.5px;top:481px;height:12px;line-height:12px;">Prop.</div>
<div class="a inp" style="left:634.5px;top:479.5px;width:69.5px;height:15px;"><span class="it">selection</span><span class="dd"><i></i></span></div>
<div class="a t" style="left:710.5px;top:479px;height:12px;line-height:12px;">Value</div>
<div class="a inp" style="left:733px;top:479.5px;width:67.5px;height:15px;"></div>
<div class="a btn" style="left:806.6px;top:479px;width:18.3px;height:18.1px;"></div><svg class="a" style="left:809.5px;top:482.4px" width="12" height="12" viewBox="0 0 12 12"><rect x="0" y="0" width="12" height="12" rx="1.8" fill="url(#rg)"/><path d="M6 2.8V9.2M2.8 6H9.2" stroke="#fff" stroke-width="2" fill="none"/></svg>
<div class="a btn" style="left:829px;top:479px;width:18.3px;height:18.1px;"></div><svg class="a" style="left:831.9px;top:482.4px" width="12" height="12" viewBox="0 0 12 12"><rect x="0" y="0" width="12" height="12" rx="1.8" fill="url(#rg)"/><path d="M2.8 6H9.2" stroke="#fff" stroke-width="2.2" fill="none"/></svg>
<div class="a btn" style="left:866.6px;top:479px;width:18.3px;height:18.1px;"></div><svg class="a" style="left:869.5px;top:482.4px" width="12" height="12" viewBox="0 0 12 12"><rect x="0" y="0" width="12" height="12" rx="1.8" fill="url(#rg)"/><path d="M3.7 3.7L8.3 8.3M8.3 3.7L3.7 8.3" stroke="#fff" stroke-width="2" fill="none"/></svg>
<div class="a btn" style="left:872.8px;top:509.5px;width:18.3px;height:18.1px;"></div><svg class="a" style="left:875.7px;top:512.9px" width="12" height="12" viewBox="0 0 12 12"><rect x="0" y="0" width="12" height="12" rx="1.8" fill="url(#rg)"/><path d="M2.9 6.3L5.1 8.3L9.2 4.1" stroke="#fff" stroke-width="2" fill="none"/></svg>
<div class="a gb" style="left:908.5px;top:76.5px;width:324.5px;height:522px;"></div>
<div class="a t" style="left:912.5px;top:70.5px;height:12px;line-height:12px;background:#c1c1c1;padding:0 2px;">Preview</div>
<div class="a " style="left:915px;top:89.5px;width:311px;height:478.5px;background:#fff;border:1px solid;border-color:#3a3a3a #e8e8e8 #e8e8e8 #3a3a3a"></div>
<div class="a c" style="left:916.5px;top:90.6px;height:12px;line-height:12px;font-size:8.1px;letter-spacing:-0.15px;color:#111">class CfgSkeletons</div>
<div class="a c" style="left:916.5px;top:100.36px;height:12px;line-height:12px;font-size:8.1px;letter-spacing:-0.15px;color:#111">{</div>
<div class="a c" style="left:952.5px;top:110.12px;height:12px;line-height:12px;font-size:8.1px;letter-spacing:-0.15px;color:#111">//skelRefClass</div>
<div class="a c" style="left:952.5px;top:129.64px;height:12px;line-height:12px;font-size:8.1px;letter-spacing:-0.15px;color:#111">//skelClass1</div>
<div class="a c" style="left:916.5px;top:149.16px;height:12px;line-height:12px;font-size:8.1px;letter-spacing:-0.15px;color:#111">};</div>
<div class="a c" style="left:916.5px;top:158.92px;height:12px;line-height:12px;font-size:8.1px;letter-spacing:-0.15px;color:#111">class CfgModels</div>
<div class="a c" style="left:916.5px;top:168.68px;height:12px;line-height:12px;font-size:8.1px;letter-spacing:-0.15px;color:#111">{</div>
<div class="a c" style="left:952.5px;top:178.44px;height:12px;line-height:12px;font-size:8.1px;letter-spacing:-0.15px;color:#111">class Default</div>
<div class="a c" style="left:952.5px;top:188.2px;height:12px;line-height:12px;font-size:8.1px;letter-spacing:-0.15px;color:#111">{</div>
<div class="a c" style="left:988.5px;top:197.96px;height:12px;line-height:12px;font-size:8.1px;letter-spacing:-0.15px;color:#111">sectionsInherit = "";</div>
<div class="a c" style="left:988.5px;top:207.72px;height:12px;line-height:12px;font-size:8.1px;letter-spacing:-0.15px;color:#111">sections[] = {};</div>
<div class="a c" style="left:952.5px;top:217.48px;height:12px;line-height:12px;font-size:8.1px;letter-spacing:-0.15px;color:#111">};</div>
<div class="a c" style="left:952.5px;top:237px;height:12px;line-height:12px;font-size:8.1px;letter-spacing:-0.15px;color:#111">//modelRefClass</div>
<div class="a c" style="left:952.5px;top:256.52px;height:12px;line-height:12px;font-size:8.1px;letter-spacing:-0.15px;color:#111">//modelClass1</div>
<div class="a c" style="left:916.5px;top:276.04px;height:12px;line-height:12px;font-size:8.1px;letter-spacing:-0.15px;color:#111">};</div>
<div class="a btn" style="left:1208.8px;top:575.7px;width:18.3px;height:18.1px;"></div><svg class="a" style="left:1211.7px;top:579.1px" width="12" height="12" viewBox="0 0 12 12"><rect x="0" y="0" width="12" height="12" rx="1.8" fill="url(#rg)"/><rect x="2.6" y="2.8" width="6.4" height="6.3" fill="#a4654c" stroke="#fff" stroke-width="1.25"/><circle cx="7.9" cy="8.5" r="3" fill="#161616"/><path d="M6.8 8.5H9.8M8.2 6.8L6.2 8.5L8.2 10.2Z" stroke="#fff" stroke-width="1.2" fill="#fff"/></svg>
<svg class="a" style="left:687.5px;top:528.7px;overflow:visible" width="120" height="95" viewBox="0 0 120 95"><defs><linearGradient id="mg2" x1="0" y1="0" x2="0" y2="1"><stop offset="0" stop-color="#e6e6e6"/><stop offset="0.5" stop-color="#b4b4b4"/><stop offset="1" stop-color="#6a6a6a"/></linearGradient></defs><g stroke="#d0241c" stroke-width="1.3" fill="url(#mg2)" stroke-linejoin="round"><path d="M43.5 20.600H72V25H67.500V52H72V56.400H43.5V52H48V25H43.5Z"/></g><rect x="55.5" y="25.5" width="4" height="26.5" fill="#c4c4c4" stroke="#d0241c" stroke-width=".8"/><text x="58.2" y="45.2" text-anchor="middle" font-family="Liberation Serif,serif" font-weight="bold" font-size="25.2" textLength="52.5" lengthAdjust="spacingAndGlyphs" fill="#cc1f1a" stroke="#cc1f1a" stroke-width="4.6" stroke-linejoin="miter">ARMA</text><text x="58.2" y="45.2" text-anchor="middle" font-family="Liberation Serif,serif" font-weight="bold" font-size="25.2" textLength="52.5" lengthAdjust="spacingAndGlyphs" fill="url(#mg2)" stroke="#b0b0b0" stroke-width="2.2" stroke-linejoin="miter">ARMA</text><text x="58.2" y="45.2" text-anchor="middle" font-family="Liberation Serif,serif" font-weight="bold" font-size="25.2" textLength="52.5" lengthAdjust="spacingAndGlyphs" fill="url(#mg2)">ARMA</text><g transform="translate(40.3,32.2) rotate(-21.5)"><rect x="-21.5" y="-3.3" width="43" height="6.4" fill="#c4161a" stroke="#8e0e10" stroke-width=".5"/><text x="0" y="2.2" text-anchor="middle" font-family="Liberation Sans,sans-serif" font-weight="bold" font-size="5.8" textLength="40" lengthAdjust="spacingAndGlyphs" fill="#140303" stroke="#140303" stroke-width=".35">[U]NO FFICIAL!</text></g><text x="13.1" y="63.5" font-family="Liberation Sans,sans-serif" font-weight="bold" font-size="4.7" textLength="86.6" lengthAdjust="spacing" fill="#3c3c3c" stroke="#3c3c3c" stroke-width=".25">MODEL.CFG GENERATOR</text></svg>
<div class="a dlg" style="left:152px;top:28px;width:209px;height:383.5px;"></div>
<div class="a tb" style="left:155.2px;top:29px;width:203.8px;height:13px;"></div>
<svg class="a" style="left:155.2px;top:29px" width="13" height="13" viewBox="0 0 13 13"><rect width="13" height="13" rx="1.5" fill="#143f3d"/><rect x="1" y="1" width="11" height="11" rx="2" fill="#2d7d78"/><path d="M9.4 4.2A3.4 3.4 0 1 0 9.9 7.6H6.8" stroke="#eef8f6" stroke-width="1.5" fill="none"/></svg>
<div class="a tt" style="left:170px;top:29px;height:13px;line-height:13px;">Slecetion Name Set Generator</div>
<div class="a cb" style="left:345px;top:30.5px;width:12px;height:10px;"><svg width="12" height="10" viewBox="0 0 12 10" style="position:absolute;left:-1px;top:-1px"><path d="M3.2 2.2L8.8 7.8M8.8 2.2L3.2 7.8" stroke="#000" stroke-width="1.6" fill="none"/></svg></div>
<div class="a btn" style="left:160.3px;top:49.3px;width:18.3px;height:18.1px;"></div><svg class="a" style="left:163.2px;top:52.7px" width="12" height="12" viewBox="0 0 12 12"><rect x="0" y="0" width="12" height="12" rx="1.8" fill="url(#rg)"/><rect x="2.6" y="2.8" width="6.4" height="6.3" fill="#a4654c" stroke="#fff" stroke-width="1.25"/><circle cx="7.9" cy="8.5" r="3" fill="#161616"/><path d="M6.8 8.5H9.8M8.2 6.8L6.2 8.5L8.2 10.2Z" stroke="#fff" stroke-width="1.2" fill="#fff"/></svg>
<div class="a btn" style="left:183.8px;top:49.3px;width:18.3px;height:18.1px;"></div><svg class="a" style="left:186.7px;top:52.7px" width="12" height="12" viewBox="0 0 12 12"><rect x="0" y="0" width="12" height="12" rx="1.8" fill="url(#rg)"/><rect x="2.6" y="2.8" width="6.4" height="6.3" fill="#a4654c" stroke="#fff" stroke-width="1.25"/><circle cx="7.9" cy="8.5" r="3" fill="#161616"/><path d="M6 8.5H9M7.6 6.8L9.600 8.5L7.6 10.2Z" stroke="#fff" stroke-width="1.2" fill="#fff"/></svg>
<div class="a btn" style="left:335.6px;top:49.3px;width:18.3px;height:18.1px;"></div><svg class="a" style="left:338.5px;top:52.7px" width="12" height="12" viewBox="0 0 12 12"><rect x="0" y="0" width="12" height="12" rx="1.8" fill="url(#rg)"/><path d="M3.7 3.7L8.3 8.3M8.3 3.7L3.7 8.3" stroke="#fff" stroke-width="2" fill="none"/></svg>
<div class="a t" style="left:160px;top:69.8px;height:12px;line-height:12px;">Currently Loaded Set: Fixed Wing</div>
<div class="a lv" style="left:161px;top:90px;width:191.5px;height:243px;"></div>
<div class="a lvh" style="left:162px;top:91px;width:189.5px;height:12.5px;"></div>
<div class="a " style="left:241px;top:91px;width:2px;height:12.5px;background:#3c3c3c"></div>
<div class="a t" style="left:166px;top:91.25px;height:12px;line-height:12px;">Description</div>
<div class="a t" style="left:246px;top:91.25px;height:12px;line-height:12px;">Selection Name</div>
<div class="a " style="left:162px;top:115.77px;width:189.5px;height:1px;background:#cecece"></div>
<div class="a " style="left:162px;top:128.54px;width:189.5px;height:1px;background:#cecece"></div>
<div class="a " style="left:162px;top:141.31px;width:189.5px;height:1px;background:#cecece"></div>
<div class="a " style="left:162px;top:154.08px;width:189.5px;height:1px;background:#cecece"></div>
<div class="a " style="left:162px;top:166.85px;width:189.5px;height:1px;background:#cecece"></div>
<div class="a " style="left:162px;top:179.62px;width:189.5px;height:1px;background:#cecece"></div>
<div class="a " style="left:162px;top:192.39px;width:189.5px;height:1px;background:#cecece"></div>
<div class="a " style="left:162px;top:205.16px;width:189.5px;height:1px;background:#cecece"></div>
<div class="a " style="left:162px;top:217.93px;width:189.5px;height:1px;background:#cecece"></div>
<div class="a " style="left:162px;top:230.7px;width:189.5px;height:1px;background:#cecece"></div>
<div class="a " style="left:162px;top:243.47px;width:189.5px;height:1px;background:#cecece"></div>
<div class="a " style="left:162px;top:256.24px;width:189.5px;height:1px;background:#cecece"></div>
<div class="a " style="left:162px;top:269.01px;width:189.5px;height:1px;background:#cecece"></div>
<div class="a " style="left:162px;top:281.78px;width:189.5px;height:1px;background:#cecece"></div>
<div class="a " style="left:162px;top:288.165px;width:189.5px;height:1px;background:#dcdcdc"></div>
<div class="a " style="left:162px;top:294.55px;width:189.5px;height:1px;background:#cecece"></div>
<div class="a " style="left:162px;top:300.935px;width:189.5px;height:1px;background:#dcdcdc"></div>
<div class="a " style="left:162px;top:307.32px;width:189.5px;height:1px;background:#cecece"></div>
<div class="a " style="left:162px;top:313.705px;width:189.5px;height:1px;background:#dcdcdc"></div>
<div class="a " style="left:162px;top:320.09px;width:189.5px;height:1px;background:#cecece"></div>
<div class="a " style="left:162px;top:326.475px;width:189.5px;height:1px;background:#dcdcdc"></div>
<div class="a " style="left:241.5px;top:103.5px;width:1px;height:228.5px;background:#d0d0d0"></div>
<div class="a " style="left:167px;top:105.185px;width:9px;height:9px;background:#fff;border:1.7px solid #0a0a0a;box-sizing:border-box"></div>
<div class="a t" style="left:180px;top:103.885px;height:12px;line-height:12px;">Aeleron</div>
<div class="a t" style="left:246px;top:103.885px;height:12px;line-height:12px;">aeler</div>
<div class="a " style="left:167px;top:117.955px;width:9px;height:9px;background:#fff;border:1.7px solid #0a0a0a;box-sizing:border-box"></div>
<div class="a t" style="left:180px;top:116.655px;height:12px;line-height:12px;">Air-Brake</div>
<div class="a t" style="left:246px;top:116.655px;height:12px;line-height:12px;">abreak</div>
<div class="a " style="left:167px;top:130.725px;width:9px;height:9px;background:#fff;border:1.7px solid #0a0a0a;box-sizing:border-box"></div>
<div class="a t" style="left:180px;top:129.425px;height:12px;line-height:12px;">Canopy</div>
<div class="a t" style="left:246px;top:129.425px;height:12px;line-height:12px;">canopy</div>
<div class="a " style="left:167px;top:143.495px;width:9px;height:9px;background:#fff;border:1.7px solid #0a0a0a;box-sizing:border-box"></div>
<div class="a t" style="left:180px;top:142.195px;height:12px;line-height:12px;">Cargo-Door</div>
<div class="a t" style="left:246px;top:142.195px;height:12px;line-height:12px;">cdoor</div>
<div class="a " style="left:167px;top:156.265px;width:9px;height:9px;background:#fff;border:1.7px solid #0a0a0a;box-sizing:border-box"></div>
<div class="a t" style="left:180px;top:154.965px;height:12px;line-height:12px;">Door</div>
<div class="a t" style="left:246px;top:154.965px;height:12px;line-height:12px;">door</div>
<div class="a " style="left:167px;top:169.035px;width:9px;height:9px;background:#fff;border:1.7px solid #0a0a0a;box-sizing:border-box"></div>
<div class="a t" style="left:180px;top:167.735px;height:12px;line-height:12px;">Elevator</div>
<div class="a t" style="left:246px;top:167.735px;height:12px;line-height:12px;">elev</div>
<div class="a " style="left:167px;top:181.805px;width:9px;height:9px;background:#fff;border:1.7px solid #0a0a0a;box-sizing:border-box"></div>
<div class="a t" style="left:180px;top:180.505px;height:12px;line-height:12px;">Flap</div>
<div class="a t" style="left:246px;top:180.505px;height:12px;line-height:12px;">flap</div>
<div class="a " style="left:167px;top:194.575px;width:9px;height:9px;background:#fff;border:1.7px solid #0a0a0a;box-sizing:border-box"></div>
<div class="a t" style="left:180px;top:193.275px;height:12px;line-height:12px;">Gear</div>
<div class="a t" style="left:246px;top:193.275px;height:12px;line-height:12px;">gear</div>
<div class="a " style="left:167px;top:207.345px;width:9px;height:9px;background:#fff;border:1.7px solid #0a0a0a;box-sizing:border-box"></div>
<div class="a t" style="left:180px;top:206.045px;height:12px;line-height:12px;">Gear-Door</div>
<div class="a t" style="left:246px;top:206.045px;height:12px;line-height:12px;">dgear</div>
<div class="a " style="left:167px;top:220.115px;width:9px;height:9px;background:#fff;border:1.7px solid #0a0a0a;box-sizing:border-box"></div>
<div class="a t" style="left:180px;top:218.815px;height:12px;line-height:12px;">Propeller</div>
<div class="a t" style="left:246px;top:218.815px;height:12px;line-height:12px;">prop</div>
<div class="a " style="left:167px;top:232.885px;width:9px;height:9px;background:#fff;border:1.7px solid #0a0a0a;box-sizing:border-box"></div>
<div class="a t" style="left:180px;top:231.585px;height:12px;line-height:12px;">Rudder</div>
<div class="a t" style="left:246px;top:231.585px;height:12px;line-height:12px;">rudder</div>
<div class="a " style="left:167px;top:245.655px;width:9px;height:9px;background:#fff;border:1.7px solid #0a0a0a;box-sizing:border-box"></div>
<div class="a t" style="left:180px;top:244.355px;height:12px;line-height:12px;">Slat</div>
<div class="a t" style="left:246px;top:244.355px;height:12px;line-height:12px;">slat</div>
<div class="a " style="left:167px;top:258.425px;width:9px;height:9px;background:#fff;border:1.7px solid #0a0a0a;box-sizing:border-box"></div>
<div class="a t" style="left:180px;top:257.125px;height:12px;line-height:12px;">Wheel</div>
<div class="a t" style="left:246px;top:257.125px;height:12px;line-height:12px;">wheel</div>
<div class="a " style="left:167px;top:271.195px;width:9px;height:9px;background:#fff;border:1.7px solid #0a0a0a;box-sizing:border-box"></div>
<div class="a t" style="left:180px;top:269.895px;height:12px;line-height:12px;">Wing</div>
<div class="a t" style="left:246px;top:269.895px;height:12px;line-height:12px;">wing</div>
<div class="a gb" style="left:161px;top:342px;width:191px;height:37.5px;"></div>
<div class="a t" style="left:165.5px;top:336px;height:12px;line-height:12px;background:#c1c1c1;padding:0 2px;">Add Entry</div>
<div class="a inp" style="left:166px;top:350px;width:78.5px;height:11.5px;"></div>
<div class="a inp" style="left:248px;top:350px;width:99.5px;height:11.5px;"></div>
<div class="a t" style="left:166px;top:365px;height:12px;line-height:12px;">Remember not to use any spaces in descriptions.</div>
<div class="a btn" style="left:160.3px;top:385.8px;width:18.3px;height:18.1px;"></div><svg class="a" style="left:163.2px;top:389.2px" width="12" height="12" viewBox="0 0 12 12"><rect x="0" y="0" width="12" height="12" rx="1.8" fill="url(#rg)"/><path d="M6 2.8V9.2M2.8 6H9.2" stroke="#fff" stroke-width="2" fill="none"/></svg>
<div class="a btn" style="left:183.8px;top:385.8px;width:18.3px;height:18.1px;"></div><svg class="a" style="left:186.7px;top:389.2px" width="12" height="12" viewBox="0 0 12 12"><rect x="0" y="0" width="12" height="12" rx="1.8" fill="url(#rg)"/><path d="M2.8 6H9.2" stroke="#fff" stroke-width="2.2" fill="none"/></svg>
<div class="a dlg" style="left:218.5px;top:417.5px;width:125px;height:174.5px;"></div>
<div class="a tb" style="left:220.5px;top:420.5px;width:120.5px;height:13px;"></div>
<svg class="a" style="left:220.5px;top:420.5px" width="13" height="13" viewBox="0 0 13 13"><rect width="13" height="13" rx="1.5" fill="#143f3d"/><rect x="1" y="1" width="11" height="11" rx="2" fill="#2d7d78"/><path d="M9.4 4.2A3.4 3.4 0 1 0 9.9 7.6H6.8" stroke="#eef8f6" stroke-width="1.5" fill="none"/></svg>
<div class="a tt" style="left:236px;top:420.5px;height:13px;line-height:13px;">2-Point Axis</div>
<div class="a cb" style="left:327px;top:422px;width:12px;height:10px;"><svg width="12" height="10" viewBox="0 0 12 10" style="position:absolute;left:-1px;top:-1px"><path d="M3.2 2.2L8.8 7.8M8.8 2.2L3.2 7.8" stroke="#000" stroke-width="1.6" fill="none"/></svg></div>
<div class="a gb" style="left:227px;top:446px;width:107.5px;height:66px;"></div>
<div class="a t" style="left:231px;top:440px;height:12px;line-height:12px;background:#c1c1c1;padding:0 2px;">Axis</div>
<div class="a pbtn" style="left:232.5px;top:452.5px;width:96.5px;height:23px;"><span style="line-height:22px">Point 1</span></div>
<div class="a pbtn" style="left:232.5px;top:482px;width:96.5px;height:23.5px;"><span style="line-height:22px">Point 2</span></div>
<div class="a gb" style="left:227px;top:523px;width:107.5px;height:37px;"></div>
<div class="a t" style="left:231px;top:517px;height:12px;line-height:12px;background:#c1c1c1;padding:0 2px;">Part</div>
<div class="a pbtn" style="left:232.5px;top:530.5px;width:96.5px;height:23.5px;"><span style="line-height:22px">Part</span></div>
<div class="a btn" style="left:316.8px;top:566.8px;width:18.3px;height:18.1px;"></div><svg class="a" style="left:319.7px;top:570.2px" width="12" height="12" viewBox="0 0 12 12"><rect x="0" y="0" width="12" height="12" rx="1.8" fill="url(#rg)"/><path d="M2.9 6.3L5.1 8.3L9.2 4.1" stroke="#fff" stroke-width="2" fill="none"/></svg>
<div class="a " style="left:0px;top:636px;width:1249px;height:6px;background:#c8c8c8"></div>
<div class="a " style="left:207.5px;top:636.5px;width:9px;height:9.5px;background:#d4d4d4;border:1px solid;border-color:#f2f2f2 #8a8a8a #8a8a8a #f2f2f2"></div>
<div class="a " style="left:216.5px;top:636.5px;width:93px;height:9.5px;background:#d6d6d6;border:1px solid;border-color:#f4f4f4 #8a8a8a #8a8a8a #f4f4f4"></div>
<div class="a " style="left:309.5px;top:636px;width:1.5px;height:10px;background:#1a1a1a"></div>
<div class="a " style="left:311px;top:636.5px;width:11px;height:9.5px;background:#d4d4d4;border:1px solid;border-color:#f2f2f2 #8a8a8a #8a8a8a #f2f2f2"></div>
<div class="a t" style="left:216.500px;width:93px;text-align:center;top:638.300px;line-height:12px;height:12px;">0 / 100</div>
<div class="a t" style="left:209px;top:637.500px;line-height:10px;font-size:7px">&lt;</div>
<div class="a t" style="left:314px;top:637.500px;line-height:10px;font-size:7px">&gt;</div>
</div></body></html>
